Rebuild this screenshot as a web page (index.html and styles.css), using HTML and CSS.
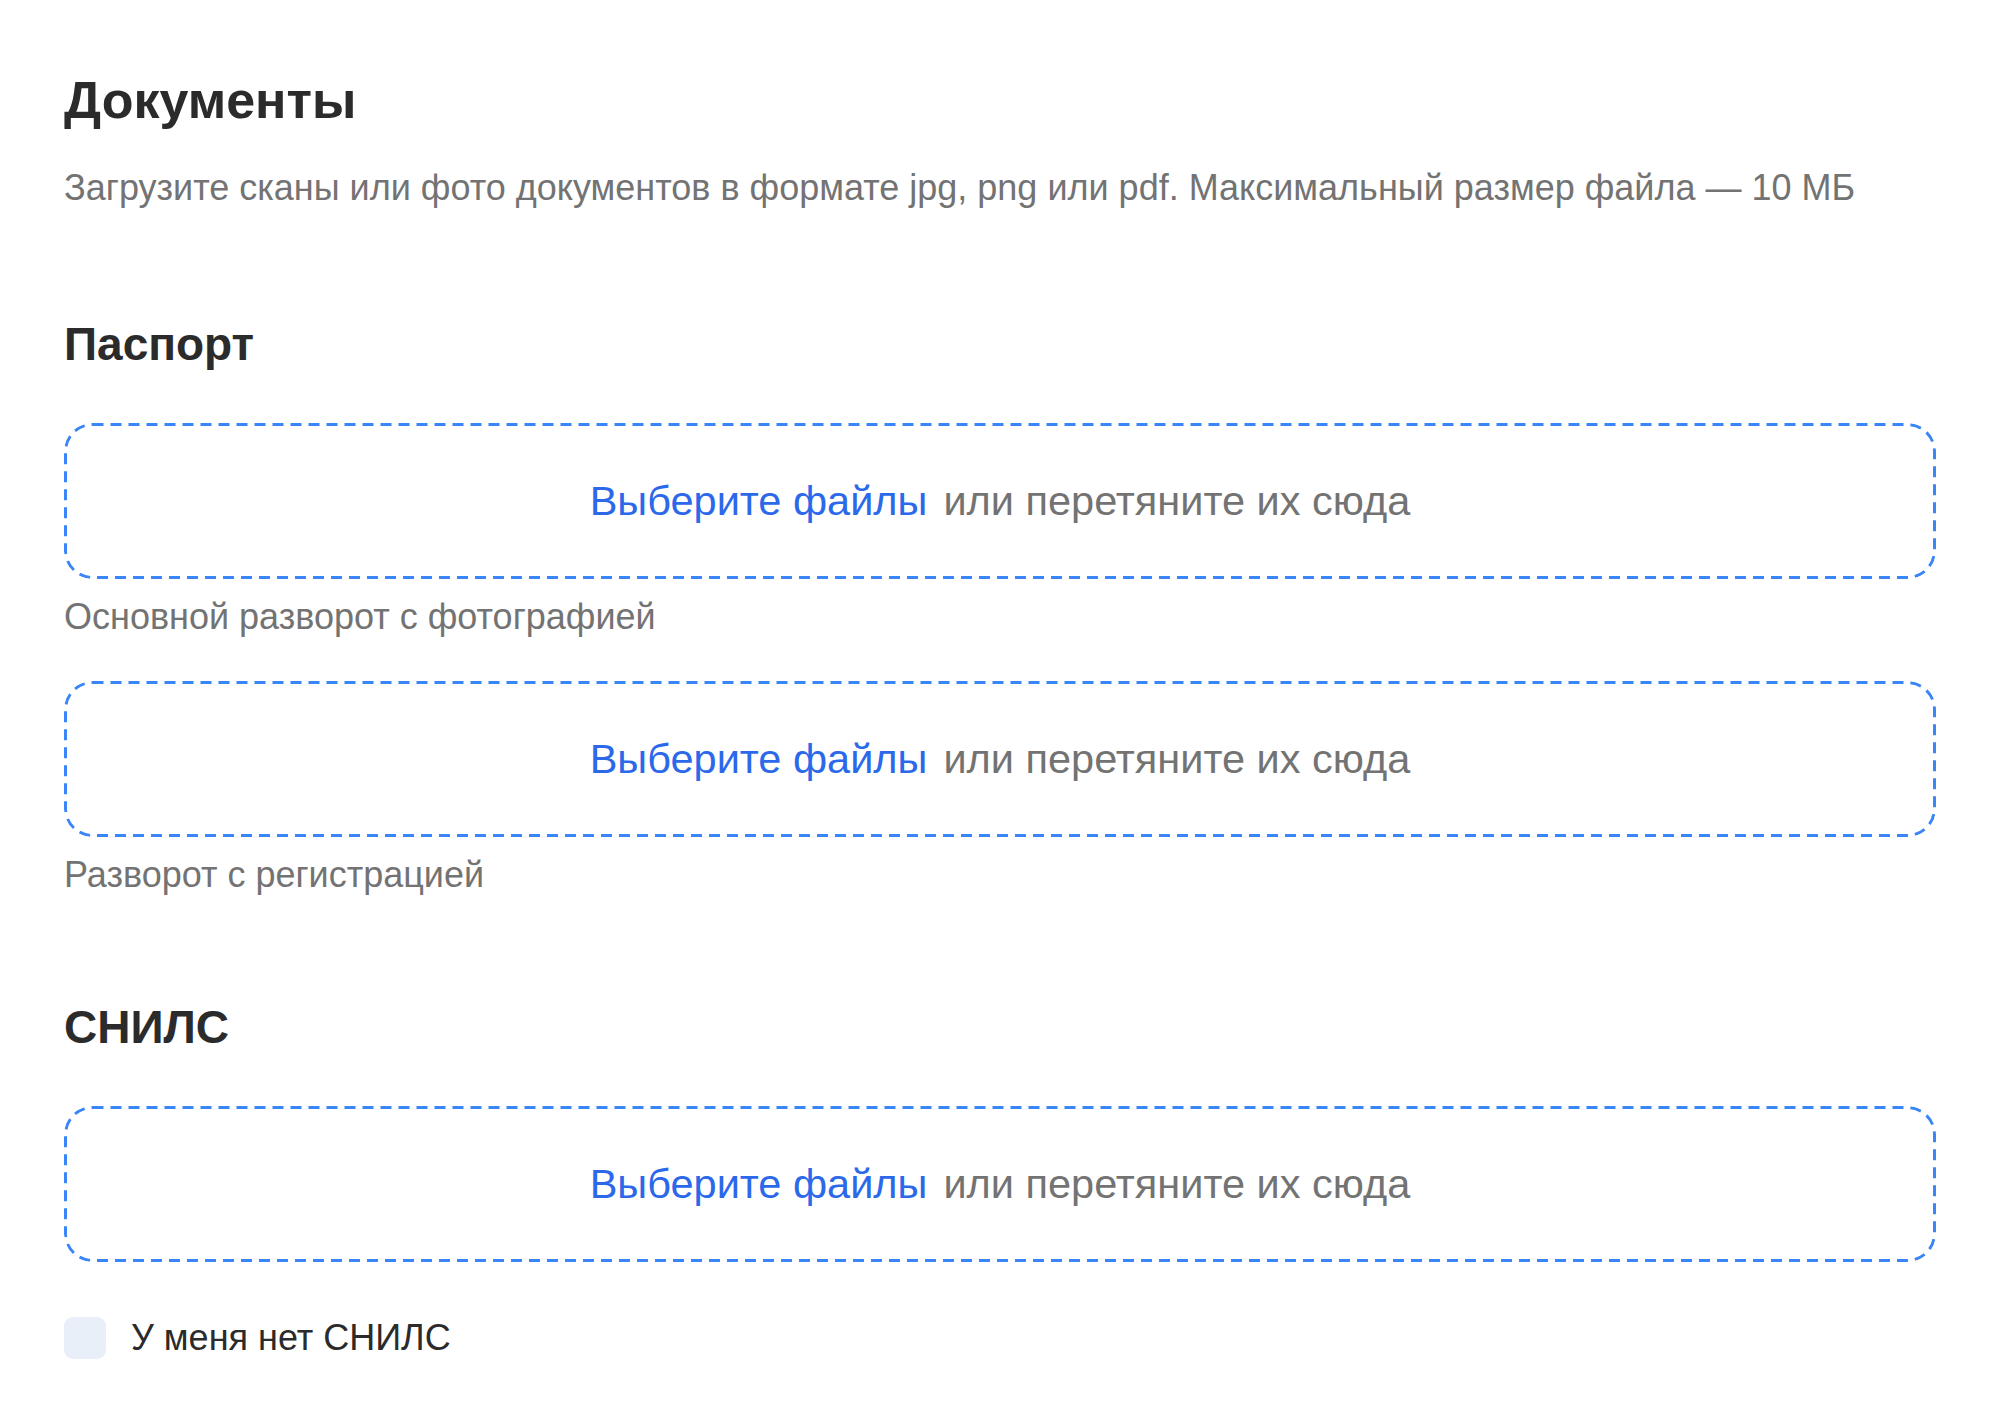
FILE: index.html
```html
<!DOCTYPE html>
<html lang="ru">
<head>
  <meta charset="UTF-8" />
  <meta name="viewport" content="width=device-width, initial-scale=1.0"/>
  <title>Документы</title>
  <link rel="stylesheet" href="styles.css">
</head>
<body>

  <h1>Документы</h1>
  <p class="hint">Загрузите сканы или фото документов в формате jpg, png или pdf. Максимальный размер файла — 10 МБ</p>

  <section class="doc-section">
    <h2>Паспорт</h2>

    <label class="dropzone">
      <input type="file" multiple>
      <span class="pick">Выберите файлы</span>
      <span class="drag">или перетяните их сюда</span>
    </label>
    <p class="caption">Основной разворот с фотографией</p>

    <label class="dropzone">
      <input type="file" multiple>
      <span class="pick">Выберите файлы</span>
      <span class="drag">или перетяните их сюда</span>
    </label>
    <p class="caption">Разворот с регистрацией</p>
  </section>

  <section class="doc-section">
    <h2>СНИЛС</h2>

    <label class="dropzone">
      <input type="file" multiple>
      <span class="pick">Выберите файлы</span>
      <span class="drag">или перетяните их сюда</span>
    </label>

    <label class="check">
      <input type="checkbox">
      <span class="box"></span>
      <span>У меня нет СНИЛС</span>
    </label>
  </section>

</body>
</html>
```

FILE: styles.css
```css
body {
  font-family: "Liberation Sans", Arial, sans-serif;
  background-color: #fff;
  color: #2b2b2b;
  margin: 0;
  padding: 68px 64px 40px;
}
h1 {
  font-size: 52px;
  line-height: 64px;
  font-weight: 700;
  margin: 0;
}
.hint {
  font-size: 36px;
  line-height: 48px;
  color: #737373;
  margin: 32px 0 0;
}
.doc-section { margin-top: 104px; }
.doc-section + .doc-section { margin-top: 100px; }
h2 {
  font-size: 46px;
  line-height: 56px;
  font-weight: 700;
  margin: 0 0 51px;
}
/* dashed frame drawn as svg so the dash length can be tuned */
.dropzone {
  display: flex;
  justify-content: center;
  align-items: center;
  gap: 16px;
  height: 156px;
  border-radius: 28px;
  background-image: url("data:image/svg+xml,%3csvg xmlns='http://www.w3.org/2000/svg' width='100%25' height='100%25'%3e%3crect x='1.5' y='1.5' width='calc(100%25 - 3px)' height='calc(100%25 - 3px)' fill='none' rx='27' ry='27' stroke='%233a85f7' stroke-width='3' stroke-dasharray='11%2c 7'/%3e%3c/svg%3e");
  font-size: 41.5px;
  cursor: pointer;
}
.dropzone input { display: none; }
.pick { color: #2c69ea; }
.drag { color: #737373; }
.caption {
  font-size: 36px;
  line-height: 48px;
  color: #737373;
  margin: 14px 0 40px;
}
.caption:last-child { margin-bottom: 0; }
.check {
  display: flex;
  align-items: center;
  gap: 25px;
  margin-top: 52px;
  font-size: 36px;
  line-height: 48px;
  cursor: pointer;
}
.check input { display: none; }
.check .box {
  width: 42px;
  height: 42px;
  border-radius: 9px;
  background-color: #e9eff8;
}
```
